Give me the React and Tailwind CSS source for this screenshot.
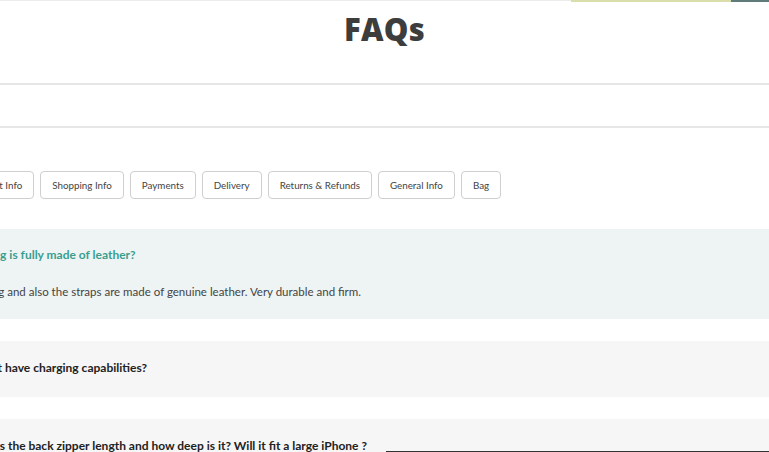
import React from "react";

const tabs = ["Product Info", "Shopping Info", "Payments", "Delivery", "Returns & Refunds", "General Info", "Bag"];

export default function App() {
  return (
    <div className="relative w-[769px] h-[452px] overflow-hidden bg-white" style={{ fontFamily: "Lato, 'Noto Sans', sans-serif" }}>
      <div className="h-px bg-[#ececec] w-full" />
      <div className="absolute top-0 left-[571px] w-[160px] h-[2px] bg-[#d9deaa]" />
      <div className="absolute top-0 left-[731px] w-[38px] h-[2px] bg-[#5f7b7a]" />
      <h1 className="text-center text-[31px] font-extrabold text-[#3d3d3d] mt-[9px] leading-[38px] tracking-[0.3px]" style={{ fontFamily: "'Open Sans', sans-serif" }}>FAQs</h1>
      <div className="mt-[35px] h-[2px] bg-[#e6e6e6]" />
      <div className="h-[41px]" />
      <div className="h-[2px] bg-[#e6e6e6]" />
      <div className="ml-[-45px] w-[900px]">
        <div className="mt-[43px] ml-[2px] flex gap-[6px]">
          {tabs.map((t) => (
            <div key={t} className="h-[28px] px-[11px] flex items-center border border-[#cfcfcf] rounded-[4px] text-[9.8px] text-[#444]">
              {t}
            </div>
          ))}
        </div>
        <div className="mt-[30px] bg-[#eef3f3] h-[90px] pl-[9px] pt-[17px]">
          <div className="text-[12px] font-bold text-[#3a9e8f] leading-[18px]">The bag is fully made of leather?</div>
          <div className="mt-[19px] text-[11.5px] text-[#444] leading-[18px]">The bag and also the straps are made of genuine leather. Very durable and firm.</div>
        </div>
        <div className="mt-[22px] bg-[#f6f6f6] h-[56px] pl-[9px] pt-[18px]">
          <div className="text-[12px] font-bold text-[#222] leading-[18px]">Does it have charging capabilities?</div>
        </div>
        <div className="mt-[22px] bg-[#f6f6f6] h-[56px] pl-[9px] pt-[18px]">
          <div className="text-[12px] font-bold text-[#222] leading-[18px]">What is the back zipper length and how deep is it? Will it fit a large iPhone ?</div>
        </div>
      </div>
      <div className="absolute bottom-0 left-[386px] right-0 h-px bg-[#333]" />
    </div>
  );
}
